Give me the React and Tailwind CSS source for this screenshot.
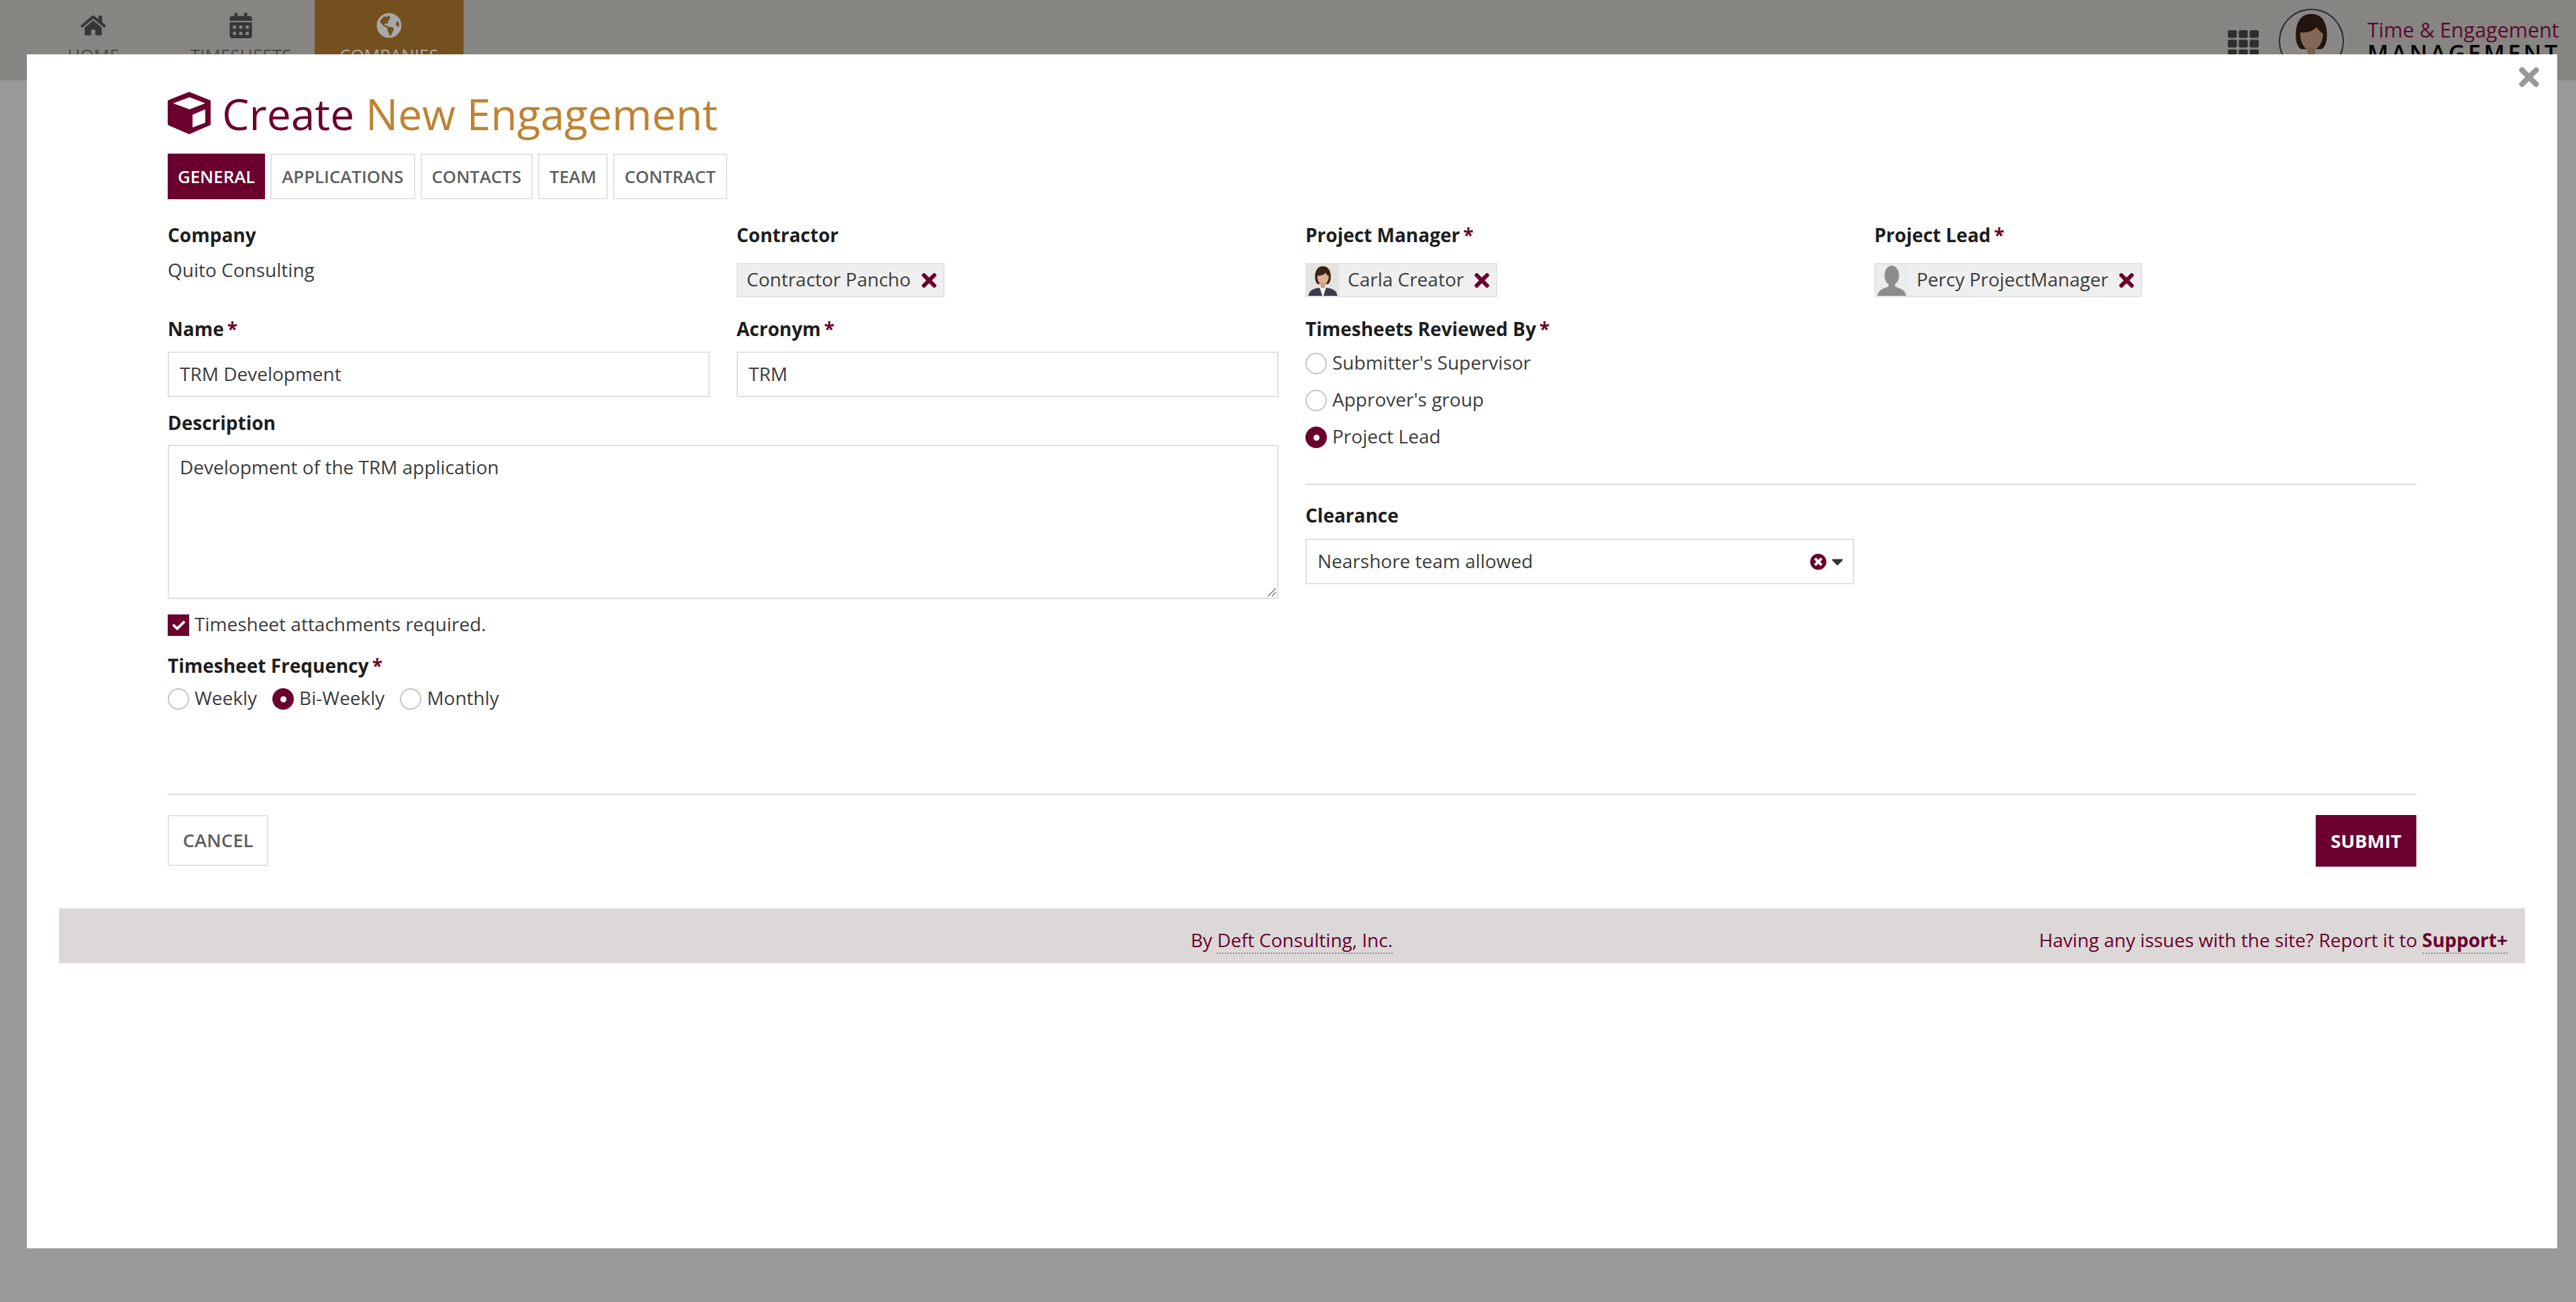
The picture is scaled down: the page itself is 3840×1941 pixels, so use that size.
import { FaHome, FaCalendarAlt, FaGlobeAmericas, FaTimes, FaTh, FaCheck, FaTimesCircle, FaCaretDown } from 'react-icons/fa';

const font = "font-['Open_Sans',sans-serif]";

function NavItem({ icon: Icon, label, active }) {
  return (
    <div className={`flex h-[81px] flex-col items-center overflow-hidden ${active ? 'w-[222px] bg-[#75501f] text-[#a8a8a8]' : 'w-[220px] text-[#363636]'}`}>
      <Icon className="mt-[19px] h-[38px] w-[38px] shrink-0" />
      <span className={`mt-[8px] text-[26px] leading-[34px] uppercase ${active ? 'text-[#a8a8a8]' : 'text-[#4a4a4a]'}`}>{label}</span>
    </div>
  );
}

function Req() {
  return <span className="ml-[5px] text-[#6b002e]">*</span>;
}

function Label({ children, required }) {
  return (
    <div className="text-[28px] leading-[40px] font-bold text-[#1e1e1e]">
      {children}
      {required && <Req />}
    </div>
  );
}

function CarlaFace({ className }) {
  return (
    <svg viewBox="0 0 48 48" className={className}>
      <rect width="48" height="48" fill="#e4e3df" />
      <path d="M2 48c1-8 6-10 14-12h16c8 2 13 4 14 12z" fill="#3a3d4a" />
      <path d="M19 35h10l-4 13h-2z" fill="#f4f2ee" />
      <path d="M24 3C15 3 12 11 12 19c0 5 1 9 4 11h16c3-2 4-6 4-11 0-8-3-16-12-16z" fill="#3a2218" />
      <path d="M15.500 17c5 1 10-1 12.500-4 1 2 3 4 5 5 0 7-4 13-9 13s-9-6-8.500-14z" fill="#dcae92" />
      <rect x="21" y="29" width="6" height="7" fill="#cf9d80" />
    </svg>
  );
}

function Silhouette({ className }) {
  return (
    <svg viewBox="0 0 48 48" className={className}>
      <rect width="48" height="48" fill="#ececec" />
      <ellipse cx="24" cy="17" rx="11" ry="15" fill="#8c8c8c" />
      <path d="M19 28h10v6c7 3 15 4 17 14H2c2-10 10-11 17-14z" fill="#8c8c8c" />
    </svg>
  );
}

function Chip({ avatar, children }) {
  return (
    <div className="flex h-[51px] w-fit items-center border-2 border-[#e3e3e3] bg-[#efefef] text-[28px] text-[#3c3c3c]">
      {avatar && <span className="mr-[12px] h-[47px] w-[48px] shrink-0 overflow-hidden">{avatar}</span>}
      <span className={`pb-[3px] ${avatar ? 'ml-[1px]' : 'ml-[13px]'}`}>{children}</span>
      <FaTimes className="mr-[10px] ml-[16px] h-[32px] w-[22px] text-[#6b002e]" />
    </div>
  );
}

function Radio({ checked }) {
  return checked ? (
    <span className="flex h-[32px] w-[32px] shrink-0 items-center justify-center rounded-full bg-[#6b002e]">
      <span className="h-[9px] w-[9px] rounded-full bg-white" />
    </span>
  ) : (
    <span className="h-[32px] w-[32px] shrink-0 rounded-full border-2 border-[#c4c4c4] bg-white" />
  );
}

function RadioOption({ checked, children }) {
  return (
    <div className="flex h-[32px] items-center gap-[8px] text-[28px] text-[#3c3c3c]">
      <Radio checked={checked} />
      <span className="pb-[4px] leading-[26px]">{children}</span>
    </div>
  );
}

function Tab({ active, children }) {
  return (
    <div className={`flex h-[68px] items-center justify-center border-2 text-[25.8px] font-semibold uppercase ${active ? 'border-[#6b002e] bg-[#6b002e] px-[13px] text-white' : 'border-[#e3e3e3] px-[15px] text-[#5f5f5f]'}`}>
      {children}
    </div>
  );
}

function TextBox({ children }) {
  return (
    <div className="flex h-[68px] items-center border-2 border-[#e0e0e0] px-[16px] pb-[3px] text-[28px] text-[#3c3c3c]">
      {children}
    </div>
  );
}

export default function App() {
  return (
    <div className={`relative h-[1941px] w-[3840px] overflow-hidden bg-[#999999] ${font}`}>
      {/* dimmed app header behind the modal */}
      <div className="flex h-[120px] items-start justify-between bg-[#868582]">
        <div className="flex pl-[29px]">
          <NavItem icon={FaHome} label="Home" />
          <NavItem icon={FaCalendarAlt} label="Timesheets" />
          <NavItem icon={FaGlobeAmericas} label="Companies" active />
        </div>
        <div className="flex items-start">
          <FaTh className="mt-[38px] h-[54px] w-[46px] text-[#2e2e2e]" />
          <div className="mt-[13px] ml-[30px] h-[97px] w-[97px] overflow-hidden rounded-full border-2 border-[#2e2e2e] bg-black">
            <CarlaFace className="h-full w-full opacity-60" />
          </div>
          <div className="mt-[27px] mr-[25px] ml-[35px] w-[286px]">
            <div className="text-[30.5px] leading-[34px] whitespace-nowrap text-[#5a0a30]">Time &amp; Engagement</div>
            <div className="text-[34px] leading-[36px] font-semibold tracking-[4.5px] whitespace-nowrap text-black">MANAGEMENT</div>
          </div>
        </div>
      </div>

      {/* modal */}
      <div className="absolute top-[81px] left-[40px] h-[1780px] w-[3772px] bg-white">
        <FaTimes className="absolute top-[12px] right-[27px] h-[44px] w-[30px] text-[#999999]" />

        <div className="pt-[56px] pr-[210px] pl-[210px]">
          <div className="flex h-[64px] items-center">
            <svg viewBox="0 0 64 64" className="h-[64px] w-[64px]">
              <path d="M32 2 62 14V48L32 61 2 48V14Z" fill="#6b002e" stroke="#6b002e" strokeWidth="4" strokeLinejoin="round" />
              <path d="M32.500 8 56 17 32.500 26 8 17Z" fill="#fff" />
              <path d="M37 34 56 26V46L37 53Z" fill="#fff" />
            </svg>
            <h1 className="ml-[17px] text-[64.2px] leading-[64px] text-[#6b002e]">
              Create <span className="text-[#c08232]">New Engagement</span>
            </h1>
          </div>

          <div className="mt-[28px] flex gap-[8px]">
            <Tab active>General</Tab>
            <Tab>Applications</Tab>
            <Tab>Contacts</Tab>
            <Tab>Team</Tab>
            <Tab>Contract</Tab>
          </div>

          <div className="mt-[33px] grid h-[853px] grid-cols-2 gap-[40px]">
            {/* left half */}
            <div>
              <div className="grid grid-cols-2 gap-[40px]">
                <div>
                  <Label>Company</Label>
                  <div className="mt-[10px] text-[28px] leading-[44px] text-[#3c3c3c]">Quito Consulting</div>
                </div>
                <div>
                  <Label>Contractor</Label>
                  <div className="mt-[22px]">
                    <Chip>Contractor Pancho</Chip>
                  </div>
                </div>
              </div>

              <div className="mt-[27px] grid grid-cols-2 gap-[40px]">
                <div>
                  <Label required>Name</Label>
                  <div className="mt-[14px]">
                    <TextBox>TRM Development</TextBox>
                  </div>
                </div>
                <div>
                  <Label required>Acronym</Label>
                  <div className="mt-[14px]">
                    <TextBox>TRM</TextBox>
                  </div>
                </div>
              </div>

              <div className="mt-[18px]">
                <Label>Description</Label>
                <div className="relative mt-[13px] h-[230px] border-2 border-[#e0e0e0] px-[16px] py-[11px] text-[28px] leading-[40px] text-[#3c3c3c]">
                  Development of the TRM application
                  <svg viewBox="0 0 16 16" className="absolute right-[1px] bottom-[1px] h-[16px] w-[16px]">
                    <path d="M15 3 3 15M15 9 9 15" stroke="#777" strokeWidth="1.5" />
                  </svg>
                </div>
              </div>

              <div className="mt-[23px] flex h-[32px] items-center gap-[8px] text-[28px] text-[#3c3c3c]">
                <span className="flex h-[32px] w-[32px] items-center justify-center bg-[#6b002e]">
                  <FaCheck className="h-[19px] w-[19px] text-white" />
                </span>
                <span className="pb-[4px] leading-[26px]">Timesheet attachments required.</span>
              </div>

              <div className="mt-[24px]">
                <Label required>Timesheet Frequency</Label>
                <div className="mt-[14px] flex gap-[23px]">
                  <RadioOption>Weekly</RadioOption>
                  <RadioOption checked>Bi-Weekly</RadioOption>
                  <RadioOption>Monthly</RadioOption>
                </div>
              </div>
            </div>

            {/* right half */}
            <div>
              <div className="grid grid-cols-2 gap-[40px]">
                <div>
                  <Label required>Project Manager</Label>
                  <div className="mt-[22px]">
                    <Chip avatar={<CarlaFace className="h-full w-full" />}>Carla Creator</Chip>
                  </div>
                </div>
                <div>
                  <Label required>Project Lead</Label>
                  <div className="mt-[22px]">
                    <Chip avatar={<Silhouette className="h-full w-full" />}>Percy ProjectManager</Chip>
                  </div>
                </div>
              </div>

              <div className="mt-[27px]">
                <Label required>Timesheets Reviewed By</Label>
                <div className="mt-[16px] flex flex-col gap-[23px]">
                  <RadioOption>Submitter's Supervisor</RadioOption>
                  <RadioOption>Approver's group</RadioOption>
                  <RadioOption checked>Project Lead</RadioOption>
                </div>
              </div>

              <div className="mt-[53px] border-t-2 border-[#dcdcdc] pt-[25px]">
                <Label>Clearance</Label>
                <div className="mt-[15px] flex h-[68px] w-[818px] items-center justify-between border-2 border-[#e0e0e0] pr-[14px] pl-[16px] text-[28px] text-[#3c3c3c]">
                  <span className="pb-[3px]">Nearshore team allowed</span>
                  <span className="flex items-center gap-[7px]">
                    <FaTimesCircle className="h-[25px] w-[25px] text-[#6b002e]" />
                    <FaCaretDown className="h-[28px] w-[18px] text-[#333333]" />
                  </span>
                </div>
              </div>
            </div>
          </div>

          <div className="flex items-start justify-between border-t-2 border-[#dcdcdc] pt-[30px]">
            <div className="flex h-[76px] w-[150px] items-center justify-center border-2 border-[#e3e3e3] text-[27.5px] font-semibold text-[#5f5f5f]">CANCEL</div>
            <div className="flex h-[77px] w-[150px] items-center justify-center bg-[#6b002e] text-[27.5px] font-bold text-white">SUBMIT</div>
          </div>
        </div>

        <div className="relative mx-[48px] mt-[62px] flex h-[82px] items-center justify-end bg-[#dcd8d8] pt-[12px] pr-[26px] text-[28px] text-[#6b002e]">
          <span className="absolute left-[1687px]">
            By <span className="border-b-2 border-dotted border-[#8a8a8a]">Deft Consulting, Inc.</span>
          </span>
          <span>
            Having any issues with the site? Report it to{' '}
            <span className="border-b-2 border-dotted border-[#8a8a8a] font-bold">Support+</span>
          </span>
        </div>
      </div>
    </div>
  );
}
